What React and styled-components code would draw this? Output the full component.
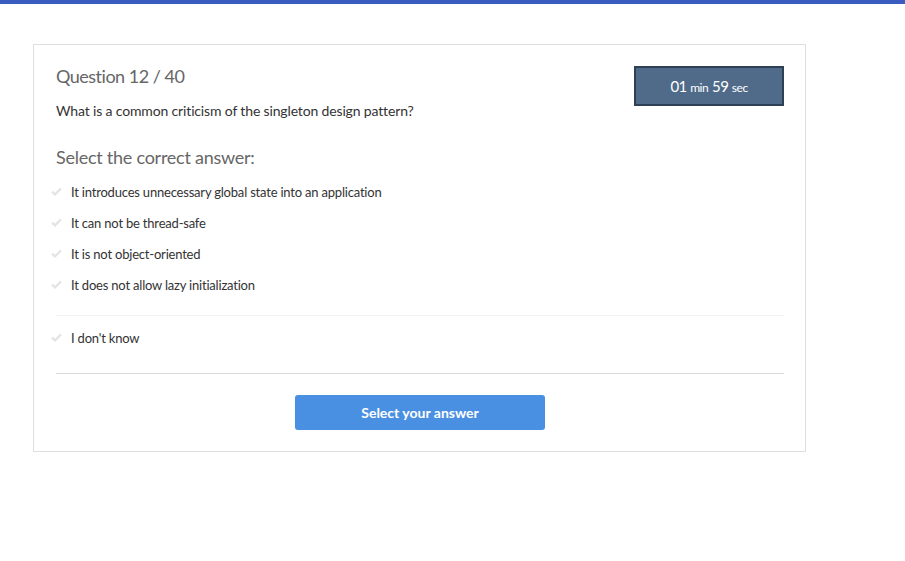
import React from "react";
import styled, { createGlobalStyle } from "styled-components";

const Global = createGlobalStyle`
  html, body { margin: 0; padding: 0; background: #fff; }
  body {
    font-family: Lato, "Open Sans", sans-serif;
    color: #333;
    font-variant-ligatures: none;
  }
`;

const TopBar = styled.div`
  height: 4px;
  background: #3a5bbf;
`;

const Card = styled.div`
  box-sizing: border-box;
  margin: 40px 0 0 33px;
  width: 773px;
  border: 1px solid #dedede;
  padding: 21px 21px 21px 22px;
`;

const Header = styled.div`
  display: flex;
  justify-content: space-between;
  align-items: flex-start;
`;

const Title = styled.h2`
  margin: 0;
  margin-top: -1px;
  font-size: 18px;
  font-weight: 400;
  letter-spacing: -0.5px;
  color: #666;
  line-height: 22px;
`;

const Question = styled.p`
  margin: 15px 0 0;
  font-size: 14px;
  letter-spacing: -0.15px;
  line-height: 18px;
  color: #333;
`;

const Timer = styled.div`
  box-sizing: border-box;
  width: 150px;
  height: 40px;
  background: #4f6b89;
  border: 2px solid #2e4154;
  color: #fff;
  display: flex;
  justify-content: center;
  align-items: baseline;
  gap: 4px;
  padding-top: 9px;
  font-size: 15px;
  letter-spacing: -0.5px;
`;

const Small = styled.span`
  font-size: 12px;
`;

const Prompt = styled.h3`
  margin: 26px 0 0;
  font-size: 18px;
  font-weight: 400;
  letter-spacing: -0.25px;
  color: #666;
  line-height: 22px;
`;

const List = styled.ul`
  list-style: none;
  margin: ${(p) => (p.$first ? "8px" : "0")} 0 0;
  padding: 0;
`;

const Item = styled.li`
  display: flex;
  align-items: center;
  height: 31px;
  margin-left: -8px;
  font-size: 13px;
  letter-spacing: -0.2px;
  color: #333;
  cursor: pointer;
`;

const Check = styled.span`
  width: 16px;
  display: inline-flex;
  justify-content: center;
  margin-right: 7px;
  color: #e4e4e4;
`;

const Divider = styled.hr`
  border: 0;
  border-top: 1px solid ${(p) => p.$color};
  margin: ${(p) => p.$margin};
`;

const Footer = styled.div`
  display: flex;
  justify-content: center;
  margin-top: 21px;
`;

const Button = styled.button`
  width: 250px;
  height: 35px;
  border: 0;
  border-radius: 3px;
  background: #4a90e2;
  color: #fff;
  font-family: Lato, sans-serif;
  font-variant-ligatures: none;
  font-weight: 700;
  font-size: 14px;
`;

const CheckIcon = () => (
  <svg width="11" height="9" viewBox="0 0 11 9">
    <path d="M1 4.6 L4 7.4 L10 1.4" fill="none" stroke="currentColor" strokeWidth="2.2" />
  </svg>
);

const answers = [
  "It introduces unnecessary global state into an application",
  "It can not be thread-safe",
  "It is not object-oriented",
  "It does not allow lazy initialization",
];

export default function App() {
  return (
    <>
      <Global />
      <TopBar />
      <Card>
        <Header>
          <div>
            <Title>Question 12 / 40</Title>
            <Question>What is a common criticism of the singleton design pattern?</Question>
          </div>
          <Timer>
            <span>01 <Small>min</Small></span>
            <span>59 <Small>sec</Small></span>
          </Timer>
        </Header>
        <Prompt>Select the correct answer:</Prompt>
        <List $first>
          {answers.map((a) => (
            <Item key={a}>
              <Check><CheckIcon /></Check>
              {a}
            </Item>
          ))}
        </List>
        <Divider $color="#f2f2f2" $margin="15px 0 6px" />
        <List>
          <Item>
            <Check><CheckIcon /></Check>
            I don't know
          </Item>
        </List>
        <Divider $color="#dcdcdc" $margin="20px 0 0" />
        <Footer>
          <Button>Select your answer</Button>
        </Footer>
      </Card>
    </>
  );
}
